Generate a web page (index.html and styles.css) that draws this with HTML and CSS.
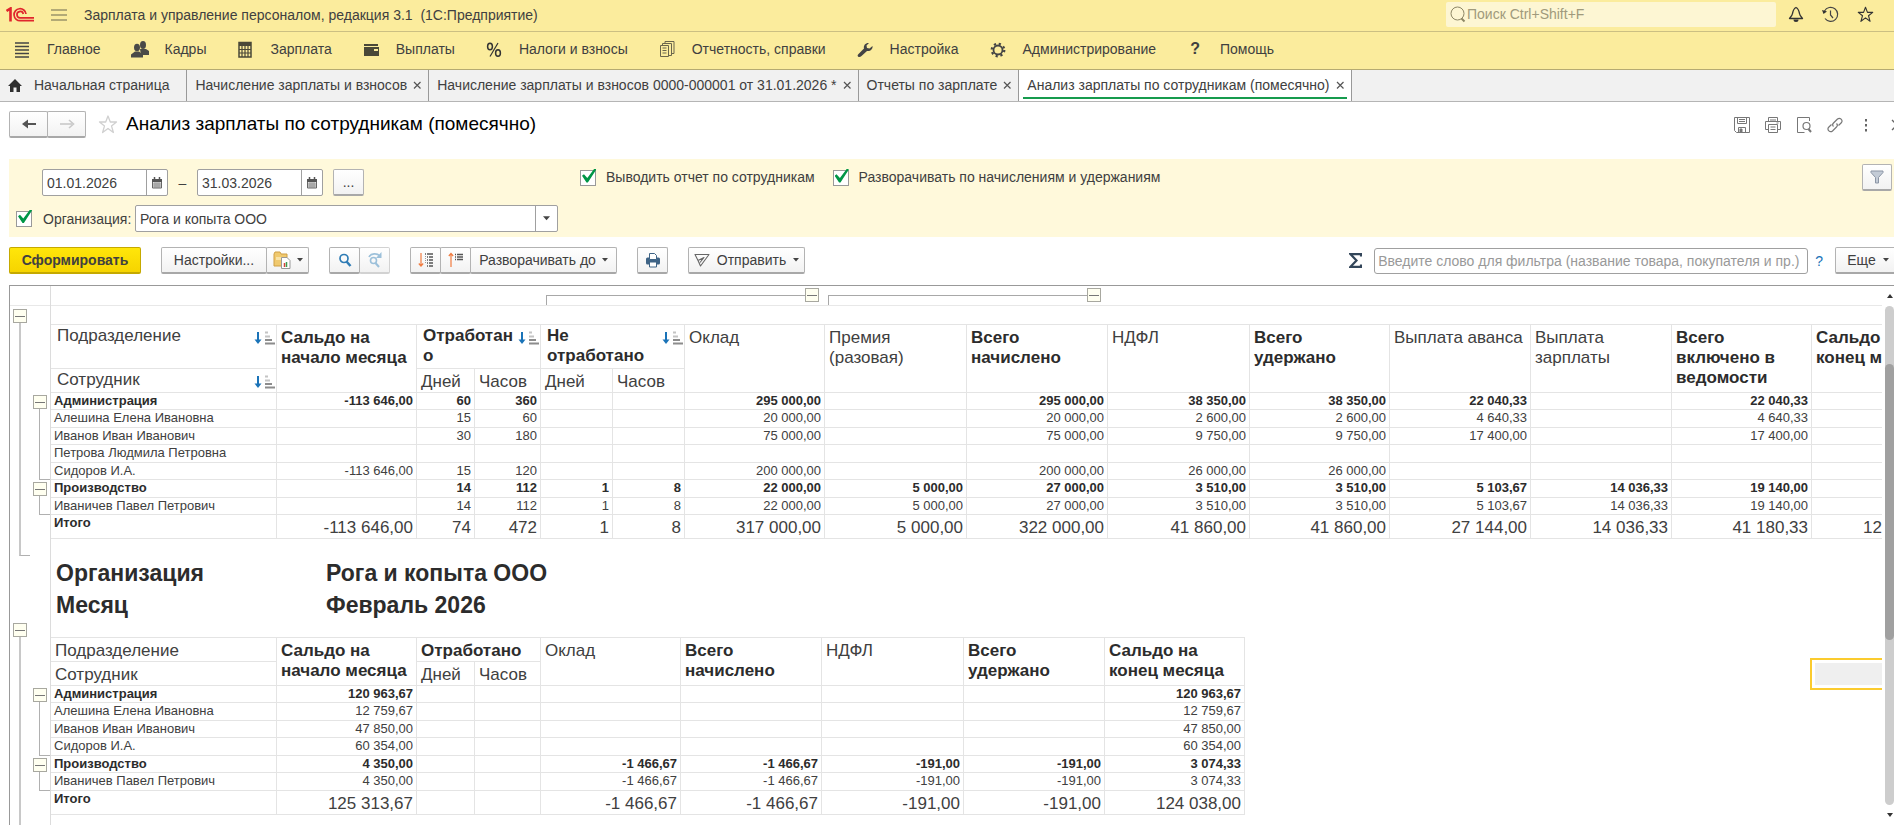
FILE: index.html
```html
<!DOCTYPE html>
<html lang="ru">
<head>
    <meta charset="utf-8">
    <title>Анализ зарплаты по сотрудникам (помесячно)</title>
    <link rel="stylesheet" href="styles.css">
</head>
<body>
<svg class="defs" aria-hidden="true">
    <symbol id="sort" viewBox="0 0 21 14">
        <path d="M4 1v10" stroke="#1a73b8" stroke-width="2"/>
        <path d="M.5 8.500h7L4 13z" fill="#1a73b8"/>
        <path d="M11 1.500h3M11 5.500h5" stroke="#c4c4c4" stroke-width="2"/>
        <path d="M11 9h7M11 12.500h10" stroke="#8c8c8c" stroke-width="2"/>
    </symbol>
    <symbol id="cross" viewBox="0 0 10 10">
        <path d="M2 2l6.500 6.500M8.500 2L2 8.500" stroke="#555" stroke-width="1.200"/>
    </symbol>
    <symbol id="calendar" viewBox="0 0 12 12">
        <path d="M1.500 2.500h9v8.500h-9z" fill="#ddd" stroke="#666"/>
        <path d="M1 2h10v3H1z" fill="#555"/>
        <path d="M3.500 0v3M8.500 0v3" stroke="#555" stroke-width="1.500"/>
        <path d="M2 7h8M2 9h8M4 5v6M6 5v6M8 5v6" stroke="#777" stroke-width=".6"/>
    </symbol>
    <symbol id="caret" viewBox="0 0 6 4"><path d="M0 0h6L3 3.500z" fill="#444"/></symbol>
    <symbol id="star" viewBox="0 0 20 20">
        <path d="M10 1.500l2.300 6h6.200l-5 3.900 1.900 6.600L10 14l-5.400 4 1.900-6.600-5-3.900h6.200z" fill="none" stroke="currentColor" stroke-width="1.300" stroke-linejoin="round"/>
    </symbol>
</svg>

<header class="titlebar">
    <svg class="logo" viewBox="0 0 28 15" fill="none" stroke="#e0262d">
        <path d="M.5 4l4-2.500V14.500" stroke-width="2.600"/>
        <path d="M20 7A6 6 0 1 0 14.500 13.700H28" stroke-width="1.700"/>
        <path d="M17.300 7A3.200 3.200 0 1 0 14.500 10.900H28" stroke-width="1.700"/>
    </svg>
    <button class="plain" aria-label="Меню">
        <svg width="16" height="14" viewBox="0 0 16 14"><path d="M0 2h16M0 7h16M0 12h16" stroke="#9c946a" stroke-width="1.500"/></svg>
    </button>
    <span class="app-name">Зарплата и управление персоналом, редакция 3.1&nbsp; (1С:Предприятие)</span>
    <label class="search">
        <svg width="16" height="17" viewBox="0 0 16 17" fill="none" stroke="#8d8766">
            <circle cx="7.500" cy="7.500" r="6.500"/><path d="M11.500 12.500l3 3" stroke-width="2"/>
        </svg>
        <input type="text" aria-label="Поиск" placeholder="Поиск Ctrl+Shift+F">
    </label>
    <div class="title-icons">
        <button class="plain" aria-label="Уведомления">
            <svg width="16" height="17" viewBox="0 0 16 17"><path d="M8 1.500c-2.500 1-3 3.500-3.500 6-.3 2-1.500 3-3 5h13c-1.500-2-2.700-3-3-5-.5-2.500-1-5-3.500-6z" fill="none" stroke="#333" stroke-width="1.300" stroke-linejoin="round"/><path d="M5.500 13.500h5a2.500 2.500 0 0 1-5 0z" fill="#333"/></svg>
        </button>
        <button class="plain" aria-label="История">
            <svg width="17" height="17" viewBox="0 0 17 17" fill="none" stroke="#444"><path d="M2.500 5A7 7 0 1 1 3 12.500" stroke-width="1.200"/><path d="M8.500 4.500v4.500l2.500 3" stroke-width="1.200"/><path d="M0 4l5 1.500L1.500 8z" fill="#333" stroke="none"/></svg>
        </button>
        <button class="plain" aria-label="Избранное">
            <svg width="17" height="17"><use href="#star"/></svg>
        </button>
    </div>
</header>

<nav class="menu">
    <a href="#"><svg viewBox="0 0 18 18"><path d="M2 3h14M2 6.500h14M2 10h14M2 13.500h14M2 17h14" stroke="#444" stroke-width="1.400"/></svg>Главное</a>
    <a href="#"><svg viewBox="0 0 18 18" fill="#4a4a48"><ellipse cx="12" cy="5" rx="3" ry="4"/><path d="M9 9h6l3 2v4h-8z"/><ellipse cx="6" cy="7.500" rx="3" ry="3.800"/><path d="M0 17.500v-3l4-3h4l4 3v3z"/></svg>Кадры</a>
    <a href="#"><svg viewBox="0 0 18 18"><path d="M3 2.500h12V17H3z" fill="none" stroke="#4a4838" stroke-width="1.500"/><path d="M3 2h12v4H3z" fill="#4a4838"/><path d="M3 9.500h12M3 13h12M6 6v11M9 6v11M12 6v11" stroke="#4a4838" stroke-width="1.200"/></svg>Зарплата</a>
    <a href="#"><svg viewBox="0 0 18 18" fill="#4a4838"><path d="M2 4h14v2H2zM2 7h15v9H2z"/><path d="M12 9h4v2h-4z" fill="#fbec9d"/></svg>Выплаты</a>
    <a href="#"><svg viewBox="0 0 18 18" fill="none" stroke="#333"><ellipse cx="5" cy="6.500" rx="2.400" ry="3.300" stroke-width="1.500"/><ellipse cx="13" cy="13" rx="2.400" ry="3.300" stroke-width="1.500"/><path d="M13 3L5 16.500" stroke-width="1.200"/></svg>Налоги и взносы</a>
    <a href="#"><svg viewBox="0 0 18 18" fill="#fbec9d" stroke="#6b664c"><path d="M7 1.500h9v12H7z"/><path d="M4.500 3.500h9v12h-9z"/><path d="M2.500 5.500h8v11h-8z"/><path d="M4.500 8h4M4.500 10.500h4M4.500 13h4"/></svg>Отчетность, справки</a>
    <a href="#"><svg viewBox="0 0 18 18"><path d="M2 16.500c-1-1 0-2 1-3l5-5c-.8-3.500 2-6 5-5.500L10.500 5.500l.5 2.500 2.500.5L16.500 6c.5 3-2 5.500-5.500 5l-5.500 5c-1 1-2.500 1.500-3.500.5z" fill="#444"/></svg>Настройка</a>
    <a href="#"><svg viewBox="0 0 18 18" fill="none" stroke="#444"><circle cx="9" cy="10" r="4.500" stroke-width="1.800"/><circle cx="9" cy="10" r="6.300" stroke-width="2.200" stroke-dasharray="2.200 2.750"/></svg>Администрирование</a>
    <a href="#"><b class="question">?</b>Помощь</a>
</nav>

<div class="tabs">
    <a href="#" class="tab home"><svg width="14" height="13" viewBox="0 0 14 13"><path d="M7 0l7 7h-2v6H8.500V8.500h-3V13H2V7H0z" fill="#2f2f2f"/></svg>Начальная страница</a>
    <a href="#" class="tab">Начисление зарплаты и взносов<svg class="x"><use href="#cross"/></svg></a>
    <a href="#" class="tab">Начисление зарплаты и взносов 0000-000001 от 31.01.2026 *<svg class="x"><use href="#cross"/></svg></a>
    <a href="#" class="tab">Отчеты по зарплате<svg class="x"><use href="#cross"/></svg></a>
    <a href="#" class="tab active">Анализ зарплаты по сотрудникам (помесячно)<svg class="x"><use href="#cross"/></svg></a>
</div>

<main>
    <div class="heading">
        <div class="button-group nav-buttons">
            <button class="btn" aria-label="Назад"><svg width="16" height="12" viewBox="0 0 16 12"><path d="M15 6H3" stroke="#555" stroke-width="2"/><path d="M1 6l6-4.500v9z" fill="#555"/></svg></button>
            <button class="btn" aria-label="Вперед"><svg width="16" height="12" viewBox="0 0 16 12"><path d="M1 6h12" stroke="#c9c9c9" stroke-width="1.600"/><path d="M10 2l4.500 4L10 10" fill="none" stroke="#c9c9c9" stroke-width="1.600"/></svg></button>
        </div>
        <button class="plain favorite" aria-label="В избранное"><svg width="20" height="21"><use href="#star"/></svg></button>
        <h1>Анализ зарплаты по сотрудникам (помесячно)</h1>
        <div class="heading-tools">
            <button class="plain" aria-label="Сохранить"><svg width="16" height="16" viewBox="0 0 16 16" fill="none" stroke="#777"><path d="M.5.500h15v15h-13l-2-2z"/><path d="M3.500.5h9v6h-9zM5 2.500h6M5 4.500h6M4.500 15v-4.500h7V15"/><path d="M6 12h2v3H6z" fill="#777"/></svg></button>
            <button class="plain" aria-label="Печать"><svg width="16" height="16" viewBox="0 0 16 16" fill="none" stroke="#777"><path d="M3.500 5V.5h9V5M3.500 12.500h-3v-8h15v8h-3"/><path d="M3.500 7.500h9v8h-9zM5.500 10h5M5.500 12.500h5M5 3h6M11.500 6h2"/></svg></button>
            <button class="plain" aria-label="Предварительный просмотр"><svg width="16" height="16" viewBox="0 0 16 16" fill="none" stroke="#777"><path d="M13.500 4V.5h-12v15h7"/><circle cx="10.500" cy="9" r="3.500" stroke-width="1.200"/><path d="M12.500 12l2.500 3" stroke-width="2"/></svg></button>
            <button class="plain" aria-label="Ссылка"><svg width="16" height="16" viewBox="0 0 16 16" fill="none" stroke="#777" stroke-width="1.200"><path d="M6.500 9.500c-1-1-1-2.500 0-3.500l4-4a2.700 2.700 0 0 1 3.800 3.800L11.500 8.500"/><path d="M9.500 6.500c1 1 1 2.500 0 3.500l-4 4a2.700 2.700 0 0 1-3.800-3.800L4.500 7.500"/></svg></button>
            <button class="plain" aria-label="Еще действия"><svg width="16" height="16" viewBox="0 0 16 16" fill="#666"><path d="M7 2h2v2.500H7zM7 7h2v2.500H7zM7 12h2v2.500H7z"/></svg></button>
            <button class="plain" aria-label="Закрыть"><svg width="16" height="16" viewBox="0 0 16 16"><path d="M3 3l10 10M13 3L3 13" stroke="#666" stroke-width="1.300"/></svg></button>
        </div>
    </div>

    <form class="filter">
        <div class="filter-left">
            <div class="period">
                <span class="field"><input type="text" aria-label="Начало периода" value="01.01.2026"><button type="button" aria-label="Выбрать начало"><svg width="12" height="12"><use href="#calendar"/></svg></button></span>
                <span class="dash">–</span>
                <span class="field"><input type="text" aria-label="Конец периода" value="31.03.2026"><button type="button" aria-label="Выбрать конец"><svg width="12" height="12"><use href="#calendar"/></svg></button></span>
                <button type="button" class="btn more">...</button>
            </div>
            <div class="organization">
                <input type="checkbox" class="check" id="orgOn" aria-label="Отбор по организации" checked>
                <label for="org">Организация:</label>
                <span class="select">
                    <select id="org"><option>Рога и копыта ООО</option></select>
                    <svg width="6" height="4"><use href="#caret"/></svg>
                </span>
            </div>
        </div>
        <div class="filter-checks">
            <label><input type="checkbox" class="check" checked>Выводить отчет по сотрудникам</label>
            <label><input type="checkbox" class="check" checked>Разворачивать по начислениям и удержаниям</label>
        </div>
        <button type="button" class="btn funnel" aria-label="Фильтр"><svg width="14" height="14" viewBox="0 0 14 14"><path d="M1 1h12v1.500L8.500 7.500V13h-3V7.500L1 2.500z" fill="#c3cbd6" stroke="#8b95a5"/></svg></button>
    </form>

    <div class="toolbar">
        <button class="btn primary">Сформировать</button>
        <div class="button-group">
            <button class="btn settings">Настройки...</button>
            <button class="btn variants" aria-label="Варианты"><svg width="18" height="18" viewBox="0 0 18 18"><path d="M1 3l1-2h5l1 2h6v12H1z" fill="#f0c96e" stroke="#cf9f45"/><path d="M3 6h11v3H3z" fill="#f9e3a6"/><path d="M8.500 6.500h5.500l3 3v8H8.500z" fill="#fff" stroke="#999"/><path d="M11.500 12v4" stroke="#d8433a" stroke-width="1.500"/><path d="M13.500 11v5" stroke="#3b9b4f" stroke-width="1.500"/></svg><svg width="6" height="4"><use href="#caret"/></svg></button>
        </div>
        <div class="button-group">
            <button class="btn icon" aria-label="Найти"><svg width="14" height="14" viewBox="0 0 14 14" fill="none" stroke="#2f7cb5"><circle cx="6" cy="5.500" r="4" stroke-width="1.700"/><path d="M8.500 8.500l4 4.500" stroke-width="2.500"/></svg></button>
            <button class="btn icon faded" aria-label="Найти далее"><svg width="16" height="16" viewBox="0 0 16 16" fill="none" stroke="#9cc0da"><path d="M2 5c2-4 8-4 11-1" stroke-width="1.600"/><path d="M14.500 0v6h-5.500z" fill="#9cc0da" stroke="none"/><circle cx="6.500" cy="8.500" r="3" stroke-width="1.600"/><path d="M8.500 11l3.500 4" stroke-width="2"/></svg></button>
        </div>
        <div class="button-group">
            <button class="btn icon" aria-label="Развернуть"><svg width="16" height="16" viewBox="0 0 16 16" fill="none"><path d="M3 1v13M.8 11.500L3 14l2.200-2.500" stroke="#f07b3f" stroke-width="1.200"/><path d="M7 2h1M9 2h6M9 5h1M11 5h4M9 8h1M11 8h4M9 11h1M11 11h4M9 14h1M11 14h4" stroke="#555" stroke-width="1.300"/><path d="M7.500 4v8" stroke="#999" stroke-dasharray="1 1"/></svg></button>
            <button class="btn icon" aria-label="Свернуть"><svg width="16" height="16" viewBox="0 0 16 16" fill="none"><path d="M3 15V1.500M.8 4L3 1.500 5.200 4" stroke="#f07b3f" stroke-width="1.200"/><path d="M7 2.500h1M9 2.500h6M7 5h1M9 5h6M7 7.500h1M9 7.500h6" stroke="#555" stroke-width="1.300"/></svg></button>
            <button class="btn expand">Разворачивать до<svg width="6" height="4"><use href="#caret"/></svg></button>
        </div>
        <button class="btn icon" aria-label="Печать"><svg width="16" height="16" viewBox="0 0 16 16"><rect x="1" y="5.500" width="14" height="7" rx="1.500" fill="#3f6486"/><path d="M4.500 1.500h5l2 2v4h-7zM4.500 10h7v5h-7z" fill="#fff" stroke="#3f6486"/></svg></button>
        <button class="btn send"><svg width="16" height="14" viewBox="0 0 16 14"><path d="M1 1.500h14L6.500 13 4 7.500zM4 7.500l6-3-4 5" fill="none" stroke="#666" stroke-linejoin="round" stroke-width="1.100"/></svg>Отправить<svg width="6" height="4"><use href="#caret"/></svg></button>
        <button class="plain sigma" aria-label="Сумма"><svg width="13" height="15" viewBox="0 0 13 15"><path d="M12 3.500V1.200H1.500L7.500 7.500l-6 6.300H12v-2.300" fill="none" stroke="#33465a" stroke-width="2.200"/></svg></button>
        <input type="text" class="word" aria-label="Фильтр" placeholder="Введите слово для фильтра (название товара, покупателя и пр.)">
        <a href="#" class="help">?</a>
        <button class="btn else">Еще<svg width="6" height="4"><use href="#caret"/></svg></button>
    </div>

    <section class="report">
        <div class="gutter">
            <div class="corner"></div>
            <div class="levels">
                <div class="level outer">
                    <div class="branch all-jan"><button aria-label="Свернуть"></button></div>
                    <div class="branch open all-feb"><button aria-label="Свернуть"></button></div>
                </div>
                <div class="level inner">
                    <div class="branch adm-jan"><button aria-label="Свернуть"></button></div>
                    <div class="branch prod"><button aria-label="Свернуть"></button></div>
                    <div class="branch adm-feb"><button aria-label="Свернуть"></button></div>
                    <div class="branch prod"><button aria-label="Свернуть"></button></div>
                </div>
            </div>
        </div>

        <div class="sheet">
            <div class="column-groups">
                <div class="span"><button aria-label="Свернуть"></button></div>
                <div class="span"><button aria-label="Свернуть"></button></div>
            </div>

            <table class="grid january">
                <colgroup>
                    <col class="w-name"><col class="w140"><col class="w58"><col class="w66"><col class="w72"><col class="w72"><col class="w140"><col class="w142"><col class="w141"><col class="w142"><col class="w140"><col class="w141"><col class="w141"><col class="w140"><col class="w140">
                </colgroup>
                <thead>
                <tr class="tall">
                    <th class="flush"><div class="sorted">Подразделение<svg><use href="#sort"/></svg></div></th>
                    <th rowspan="2" class="b">Сальдо на начало месяца</th>
                    <th colspan="2" class="b flush"><div class="sorted"><span>Отработано</span><svg><use href="#sort"/></svg></div></th>
                    <th colspan="2" class="b flush"><div class="sorted"><span>Не отработано</span><svg><use href="#sort"/></svg></div></th>
                    <th rowspan="2">Оклад</th>
                    <th rowspan="2">Премия (разовая)</th>
                    <th rowspan="2" class="b">Всего начислено</th>
                    <th rowspan="2">НДФЛ</th>
                    <th rowspan="2" class="b">Всего<br>удержано</th>
                    <th rowspan="2">Выплата аванса</th>
                    <th rowspan="2">Выплата зарплаты</th>
                    <th rowspan="2" class="b">Всего включено в ведомости</th>
                    <th rowspan="2" class="b">Сальдо на конец месяца</th>
                </tr>
                <tr class="low">
                    <th class="flush"><div class="sorted">Сотрудник<svg><use href="#sort"/></svg></div></th>
                    <th>Дней</th><th>Часов</th><th>Дней</th><th>Часов</th>
                </tr>
                </thead>
                <tbody>
                <tr class="b"><td>Администрация</td><td>-113 646,00</td><td>60</td><td>360</td><td></td><td></td><td>295 000,00</td><td></td><td>295 000,00</td><td>38 350,00</td><td>38 350,00</td><td>22 040,33</td><td></td><td>22 040,33</td><td></td></tr>
                <tr><td>Алешина Елена Ивановна</td><td></td><td>15</td><td>60</td><td></td><td></td><td>20 000,00</td><td></td><td>20 000,00</td><td>2 600,00</td><td>2 600,00</td><td>4 640,33</td><td></td><td>4 640,33</td><td></td></tr>
                <tr><td>Иванов Иван Иванович</td><td></td><td>30</td><td>180</td><td></td><td></td><td>75 000,00</td><td></td><td>75 000,00</td><td>9 750,00</td><td>9 750,00</td><td>17 400,00</td><td></td><td>17 400,00</td><td></td></tr>
                <tr><td>Петрова Людмила Петровна</td><td></td><td></td><td></td><td></td><td></td><td></td><td></td><td></td><td></td><td></td><td></td><td></td><td></td><td></td></tr>
                <tr><td>Сидоров И.А.</td><td>-113 646,00</td><td>15</td><td>120</td><td></td><td></td><td>200 000,00</td><td></td><td>200 000,00</td><td>26 000,00</td><td>26 000,00</td><td></td><td></td><td></td><td></td></tr>
                <tr class="b"><td>Производство</td><td></td><td>14</td><td>112</td><td>1</td><td>8</td><td>22 000,00</td><td>5 000,00</td><td>27 000,00</td><td>3 510,00</td><td>3 510,00</td><td>5 103,67</td><td>14 036,33</td><td>19 140,00</td><td></td></tr>
                <tr><td>Иваничев Павел Петрович</td><td></td><td>14</td><td>112</td><td>1</td><td>8</td><td>22 000,00</td><td>5 000,00</td><td>27 000,00</td><td>3 510,00</td><td>3 510,00</td><td>5 103,67</td><td>14 036,33</td><td>19 140,00</td><td></td></tr>
                </tbody>
                <tfoot>
                <tr><td>Итого</td><td>-113 646,00</td><td>74</td><td>472</td><td>1</td><td>8</td><td>317 000,00</td><td>5 000,00</td><td>322 000,00</td><td>41 860,00</td><td>41 860,00</td><td>27 144,00</td><td>14 036,33</td><td>41 180,33</td><td>125 313,67</td></tr>
                </tfoot>
            </table>

            <dl class="params">
                <dt>Организация</dt><dd>Рога и копыта ООО</dd>
                <dt>Месяц</dt><dd>Февраль 2026</dd>
            </dl>

            <table class="grid february">
                <colgroup>
                    <col class="w-name"><col class="w140"><col class="w58"><col class="w66"><col class="w140"><col class="w141"><col class="w142"><col class="w141"><col class="w140">
                </colgroup>
                <thead>
                <tr class="low">
                    <th>Подразделение</th>
                    <th rowspan="2" class="b">Сальдо на начало месяца</th>
                    <th colspan="2" class="b">Отработано</th>
                    <th rowspan="2">Оклад</th>
                    <th rowspan="2" class="b">Всего начислено</th>
                    <th rowspan="2">НДФЛ</th>
                    <th rowspan="2" class="b">Всего<br>удержано</th>
                    <th rowspan="2" class="b">Сальдо на конец месяца</th>
                </tr>
                <tr class="low"><th>Сотрудник</th><th>Дней</th><th>Часов</th></tr>
                </thead>
                <tbody>
                <tr class="b"><td>Администрация</td><td>120 963,67</td><td></td><td></td><td></td><td></td><td></td><td></td><td>120 963,67</td></tr>
                <tr><td>Алешина Елена Ивановна</td><td>12 759,67</td><td></td><td></td><td></td><td></td><td></td><td></td><td>12 759,67</td></tr>
                <tr><td>Иванов Иван Иванович</td><td>47 850,00</td><td></td><td></td><td></td><td></td><td></td><td></td><td>47 850,00</td></tr>
                <tr><td>Сидоров И.А.</td><td>60 354,00</td><td></td><td></td><td></td><td></td><td></td><td></td><td>60 354,00</td></tr>
                <tr class="b"><td>Производство</td><td>4 350,00</td><td></td><td></td><td>-1 466,67</td><td>-1 466,67</td><td>-191,00</td><td>-191,00</td><td>3 074,33</td></tr>
                <tr><td>Иваничев Павел Петрович</td><td>4 350,00</td><td></td><td></td><td>-1 466,67</td><td>-1 466,67</td><td>-191,00</td><td>-191,00</td><td>3 074,33</td></tr>
                </tbody>
                <tfoot>
                <tr><td>Итого</td><td>125 313,67</td><td></td><td></td><td>-1 466,67</td><td>-1 466,67</td><td>-191,00</td><td>-191,00</td><td>124 038,00</td></tr>
                </tfoot>
            </table>
            <div class="cursor"></div>
        </div>

        <div class="scrollbar">
            <svg width="6" height="4" viewBox="0 0 6 4"><path d="M0 4h6L3 0z" fill="#333"/></svg>
            <div class="track"><div class="thumb"></div></div>
            <svg width="6" height="4" viewBox="0 0 6 4"><path d="M0 0h6L3 4z" fill="#333"/></svg>
        </div>
    </section>
</main>
</body>
</html>
```
FILE: styles.css
```css
* {
    box-sizing: border-box;
}

body {
    margin: 0;
    height: 100vh;
    display: flex;
    flex-direction: column;
    overflow: hidden;
    background: #fff;
    color: #404040;
    font: 14px/18px "Liberation Sans", Arial, sans-serif;
}

button, input, select {
    font: inherit;
    color: inherit;
    margin: 0;
}

a {
    color: inherit;
    text-decoration: none;
}

svg {
    flex: none;
}

.defs {
    position: absolute;
    width: 0;
    height: 0;
}

.plain {
    display: flex;
    padding: 0;
    border: 0;
    background: none;
}

/* title bar */
.titlebar {
    display: flex;
    align-items: center;
    height: 32px;
    padding: 0 20px 2px 6px;
    background: #fbec9d;
    border-bottom: 1px solid #cbbf83;
}

.logo {
    width: 28px;
    height: 15px;
    margin-right: 17px;
}

.app-name {
    margin-left: 17px;
}

.search {
    display: flex;
    align-items: center;
    width: 330px;
    height: 25px;
    margin-left: auto;
    padding-left: 4px;
    background: #fdf6d3;
    border-radius: 2px;
}

.search input {
    flex: 1;
    padding: 0 0 2px 1px;
    border: 0;
    background: none;
}

.search input::placeholder {
    color: #a09a7c;
}

.title-icons {
    display: flex;
    gap: 18px;
    margin-left: 12px;
    color: #333;
}

/* sections */
.menu {
    display: flex;
    align-items: center;
    gap: 30px;
    height: 38px;
    padding: 0 13px 4px;
    background: #fbec9d;
    border-bottom: 1px solid #b5aa72;
    white-space: nowrap;
}

.menu a {
    display: flex;
    align-items: center;
    gap: 16px;
}

.menu svg {
    width: 18px;
    height: 18px;
}

.question {
    width: 18px;
    text-align: center;
    font-size: 16px;
}

/* open windows */
.tabs {
    display: flex;
    height: 32px;
    background: #f1f1f1;
    border-bottom: 1px solid #b5b5b5;
    white-space: nowrap;
}

.tab {
    display: flex;
    align-items: center;
    gap: 5px;
    padding: 0 6px 1px 8px;
    border-right: 1px solid #999;
}

.tab .x {
    width: 10px;
    height: 10px;
}

.tab.home {
    gap: 12px;
    padding: 0 17px 1px 8px;
}

.tab.active {
    background: #fff linear-gradient(#169b4e, #169b4e) 50% 27px / calc(100% - 8px) 2px no-repeat;
}

/* form */
main {
    flex: 1;
    min-height: 0;
    display: flex;
    flex-direction: column;
    padding-left: 9px;
}

.btn {
    display: flex;
    align-items: center;
    justify-content: center;
    height: 27px;
    padding: 0;
    border: 1px solid #b3b3b3;
    border-bottom: 2px solid #a8a8a8;
    border-radius: 2px;
    background: linear-gradient(#fff, #f2f2f2);
    white-space: nowrap;
}

.button-group {
    display: flex;
}

.button-group .btn + .btn {
    margin-left: -1px;
}

.heading {
    display: flex;
    align-items: center;
    height: 57px;
    padding-bottom: 12px;
}

.nav-buttons .btn {
    width: 39px;
}

.favorite {
    margin: 0 8px 0 12px;
    color: #d0d0d0;
}

h1 {
    margin: 0;
    padding-bottom: 2px;
    color: #000;
    font-size: 19px;
    font-weight: normal;
    line-height: 24px;
}

.heading-tools {
    display: flex;
    gap: 15px;
    margin-right: -11px;
    margin-left: auto;
}

.filter {
    display: flex;
    height: 78px;
    background: #fff9db;
}

.filter-left {
    display: flex;
    flex-direction: column;
    gap: 10px;
    width: 571px;
    padding: 10px 0 0 7px;
}

.period, .organization {
    display: flex;
    align-items: center;
}

.period {
    height: 27px;
    padding-left: 26px;
}

.field, .select {
    display: flex;
    height: 27px;
    border: 1px solid #a0a0a0;
    border-radius: 2px;
    background: #fff;
}

.field input {
    width: 104px;
    padding: 0 4px;
    border: 0;
    border-right: 1px solid #a0a0a0;
    background: none;
}

.field button {
    width: 20px;
    padding: 2px 0 0;
    border: 0;
    background: none;
}

.dash {
    width: 29px;
    text-align: center;
}

.more {
    width: 31px;
    margin-left: 10px;
}

.organization {
    margin-top: -1px;
}

.organization label {
    width: 92px;
    margin-left: 11px;
}

.select {
    position: relative;
    width: 423px;
}

.select select {
    flex: 1;
    padding: 0 4px;
    border: 0;
    background: none;
    appearance: none;
}

.select svg {
    position: absolute;
    top: 0;
    right: 0;
    width: 22px;
    height: 25px;
    padding: 10px 7px;
    border-left: 1px solid #a0a0a0;
    pointer-events: none;
}

.check {
    position: relative;
    flex: none;
    width: 16px;
    height: 16px;
    border: 1px solid #999;
    background: #fff;
    appearance: none;
}

.check:checked::after {
    content: "";
    position: absolute;
    left: 1px;
    top: -2px;
    width: 14px;
    height: 14px;
    background: #009646;
    clip-path: polygon(0 48%, 14% 38%, 38% 64%, 86% 0, 100% 0, 100% 8%, 42% 96%, 32% 96%);
}

.filter-checks {
    display: flex;
    gap: 18px;
    padding-top: 9px;
}

.filter-checks label {
    display: flex;
    gap: 10px;
    height: 18px;
}

.filter-checks .check {
    margin-top: 2px;
}

.funnel {
    width: 30px;
    margin: 5px 2px 0 auto;
}

.toolbar {
    display: flex;
    align-items: center;
    gap: 20px;
    height: 48px;
    padding-bottom: 1px;
}

.toolbar .icon {
    width: 31px;
}

.toolbar .faded {
    border-color: #d2d2d2;
    border-left-color: #b3b3b3;
}

.primary {
    width: 132px;
    border-color: #c5a900;
    background: linear-gradient(#ffe60a, #f6d400);
    font-weight: bold;
}

.settings {
    width: 106px;
}

.variants {
    width: 43px;
    gap: 6px;
}

.expand {
    width: 147px;
    gap: 6px;
}

.send {
    width: 117px;
    gap: 7px;
}

.sigma {
    margin-left: auto;
}

.word {
    width: 434px;
    height: 26px;
    margin-left: -8px;
    padding: 0 3px;
    border: 1px solid #a0a0a0;
    border-radius: 3px;
}

.word::placeholder {
    color: #999;
}

.help {
    margin: 0 -8px 0 -13px;
    color: #1a73b8;
}

.else {
    width: 66px;
    gap: 7px;
    margin-right: -7px;
}

/* spreadsheet */
.report {
    flex: 1;
    min-height: 0;
    display: flex;
    border-top: 1px solid #999;
    border-left: 1px solid #999;
}

.gutter {
    width: 41px;
    border-right: 1px solid #dcdcdc;
    overflow: hidden;
}

.corner {
    height: 20px;
    border-bottom: 1px solid #e8e8e8;
}

.levels {
    display: flex;
}

.level {
    width: 20px;
}

.outer {
    padding: 3px 0 0 3px;
}

.inner {
    padding: 89px 0 0 3px;
}

.branch {
    display: flex;
    flex-direction: column;
}

.branch::after {
    content: "";
    flex: 1;
    margin-left: 6px;
    border-left: 1px solid #b0b0b0;
    border-bottom: 1px solid #b0b0b0;
}

.outer .branch::after {
    border-left: 2px solid #c8c8c8;
}

.branch.open::after {
    border-bottom: 0;
}

.branch button, .span button {
    flex: none;
    width: 14px;
    height: 14px;
    padding: 0;
    border: 1px solid #a8a8a0;
    background: #fffff0 linear-gradient(#777, #777) 50% 50% / 10px 1px no-repeat;
}

.all-jan {
    height: 247px;
}

.all-feb {
    height: 260px;
    margin-top: 67px;
}

.adm-jan {
    height: 85px;
}

.prod {
    height: 33px;
    margin-top: 2px;
}

.adm-feb {
    height: 68px;
    margin-top: 173px;
}

.sheet {
    position: relative;
    flex: 1;
    min-width: 0;
    overflow: hidden;
}

.column-groups {
    display: flex;
    gap: 9px;
    height: 20px;
    padding-left: 495px;
    border-bottom: 1px solid #e8e8e8;
}

.span {
    display: flex;
    width: 273px;
    padding-top: 2px;
}

.span::before {
    content: "";
    flex: 1;
    margin-top: 7px;
    border-top: 1px solid #a8a8a8;
    border-left: 1px solid #a8a8a8;
}

.grid {
    table-layout: fixed;
    width: 0;
    border-collapse: separate;
    border-spacing: 0;
    border-top: 1px solid #e4e4e4;
}

.january {
    margin-top: 18px;
}

.w-name { width: 226px; }
.w58 { width: 58px; }
.w66 { width: 66px; }
.w72 { width: 72px; }
.w140 { width: 140px; }
.w141 { width: 141px; }
.w142 { width: 142px; }

.grid th, .grid td {
    padding: 0 3px 0 4px;
    border-right: 1px solid #e4e4e4;
    border-bottom: 1px solid #e4e4e4;
    vertical-align: top;
}

.grid th {
    padding: 3px 0 0 4px;
    font-size: 17px;
    font-weight: normal;
    line-height: 20px;
    text-align: left;
}

.grid th.flush {
    padding: 1px 0 0 6px;
}

.grid .b {
    color: #2c2c2c;
    font-weight: bold;
}

.sorted {
    display: flex;
    justify-content: space-between;
    overflow-wrap: anywhere;
}

.sorted svg {
    width: 21px;
    height: 14px;
    margin: 5px 1px 0 0;
}

.tall {
    height: 44px;
}

.low {
    height: 24px;
}

.grid td {
    font-size: 13px;
    line-height: 16px;
    text-align: right;
}

.grid td:first-child {
    padding-left: 3px;
    text-align: left;
}

.grid tbody tr {
    height: 17px;
}

.grid tbody tr:nth-child(even) {
    height: 18px;
}

.grid tfoot tr {
    height: 24px;
}

.grid tfoot td {
    padding-top: 2px;
    font-size: 17px;
    line-height: 21px;
}

.grid tfoot td:first-child {
    padding-top: 0;
    color: #2c2c2c;
    font-size: 13px;
    font-weight: bold;
    line-height: 16px;
}

.params {
    display: grid;
    grid-template-columns: 270px 1fr;
    margin: 0;
    padding: 18px 0 16px 5px;
    color: #2c2c2c;
    font-size: 23px;
    font-weight: bold;
    line-height: 32px;
}

.params dd {
    margin: 0;
}

/* selected cell, lies over the empty part of the sheet */
.cursor {
    position: absolute;
    top: 372px;
    left: 1759px;
    width: 140px;
    height: 32px;
    padding: 3px;
    border: 2px solid #fbcb2e;
    background: #efefef content-box;
}

.scrollbar {
    display: flex;
    flex-direction: column;
    align-items: center;
    width: 9px;
    margin-left: 3px;
    padding: 8px 0;
}

.track {
    flex: 1;
    width: 9px;
    margin: 8px 0;
    border-radius: 5px;
    background: #cdcdcd;
}

.thumb {
    height: 276px;
    margin-top: 58px;
    border-radius: 5px;
    background: #a0a0a0;
}
```
